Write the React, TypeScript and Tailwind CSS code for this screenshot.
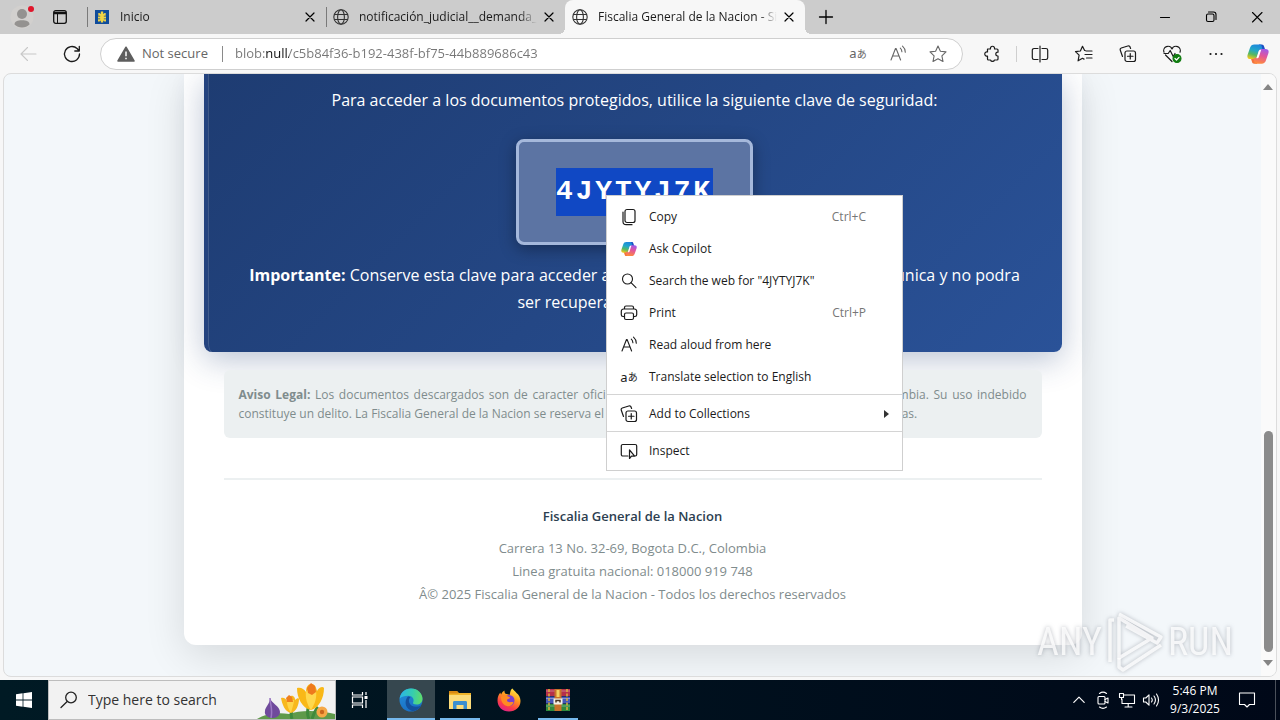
import { useId } from 'react'
import type { ReactNode } from 'react'

// Shared wrapper for the thin line icons, drawn on a 20 unit grid
function LineIcon({ children, className = 'size-5' }: { children: ReactNode; className?: string }) {
  return (
    <svg
      viewBox="0 0 20 20"
      fill="none"
      stroke="currentColor"
      strokeWidth="1.1"
      strokeLinecap="round"
      strokeLinejoin="round"
      className={className}
      aria-hidden="true"
    >
      {children}
    </svg>
  )
}

function CloseIcon() {
  return (
    <LineIcon className="size-4">
      <path d="M5 5l10 10M15 5L5 15" strokeWidth="1.5" />
    </LineIcon>
  )
}

function GlobeIcon() {
  return (
    <svg viewBox="0 0 16 16" fill="none" stroke="#333" strokeWidth="1.1" className="size-4 shrink-0" aria-hidden="true">
      <circle cx="8" cy="8" r="7.2" />
      <ellipse cx="8" cy="8" rx="3.4" ry="7.2" />
      <path d="M1.3 5.5h13.4M1.3 10.5h13.4" />
    </svg>
  )
}

function CrestIcon() {
  return (
    <svg viewBox="0 0 14 14" className="size-3.5 shrink-0" aria-hidden="true">
      <rect width="14" height="14" fill="#0f4c9c" />
      <path
        d="M5.800 1.500h2.400v2.200h1V3h1.500v2.800H8.800v.8h2.200v1.800H8.800v.8h2.200v2.200H9.200v-.7h-1v1.800H5.800v-1.800h-1v.7H3V9.200h2.200v-.8H3V6.600h2.200v-.8H3.300V3h1.500v.7h1z"
        fill="#f2d544"
      />
    </svg>
  )
}

function CopilotIcon({ className }: { className: string }) {
  const id = useId()
  return (
    <svg viewBox="0 0 24 24" className={className} aria-hidden="true">
      <defs>
        <linearGradient id={`${id}a`} x1="0.6" y1="0" x2="0.3" y2="1">
          <stop offset="0" stopColor="#1d86dd" />
          <stop offset="0.4" stopColor="#22a8c8" />
          <stop offset="0.7" stopColor="#58b860" />
          <stop offset="1" stopColor="#f0c81e" />
        </linearGradient>
        <linearGradient id={`${id}b`} x1="0.7" y1="0" x2="0.4" y2="1">
          <stop offset="0" stopColor="#a05be8" />
          <stop offset="0.45" stopColor="#e2559c" />
          <stop offset="1" stopColor="#ff8a3c" />
        </linearGradient>
      </defs>
      <path d="M13 1.500h3.200c1.300 0 2 .8 2.300 1.900L20 8h-6z" fill="#1b4fc4" />
      <path d="M11 22.500H7.800c-1.300 0-2-.8-2.300-1.900L4 16h6z" fill="#f4723c" />
      <path
        d="M8 1.500h6c1.200 0 1.600.7 1.900 1.600L17 7.500h-1.500c-1.500 0-2.200.7-2.700 2.200L11 15.500c-.5 1.500-1.300 2-3 2H3.800c-2.800 0-3.900-1.700-3.200-4.300L3.300 5.200C4 2.700 5.600 1.500 8 1.500z"
        fill={`url(#${id}a)`}
      />
      <path
        d="M16 22.500h-6c-1.200 0-1.600-.7-1.900-1.600L7 16.500h1.500c1.500 0 2.200-.7 2.700-2.200L13 8.500c.5-1.500 1.300-2 3-2h4.200c2.800 0 3.900 1.700 3.200 4.300l-2.700 8c-.7 2.500-2.300 3.700-4.700 3.700z"
        fill={`url(#${id}b)`}
      />
      <path d="M12.800 8.800c.4-1.200 1-1.500 2-1.500h.7l-2.600 7.900c-.4 1.200-1 1.500-2 1.500h-.7z" fill="#fff" />
    </svg>
  )
}

function TranslateIcon() {
  return (
    <span className="flex items-center font-['Noto_Sans','Noto_Sans_CJK_JP',sans-serif] leading-none" aria-hidden="true">
      <span className="text-[13px]">a</span>
      <span className="text-[10px]">あ</span>
    </span>
  )
}

function ReadAloudIcon() {
  return (
    <LineIcon>
      <path d="M3 16L7.500 4.500h.6L12.600 16M4.700 12h6.200" />
      <path d="M12.300 4.200c1 .9 1.500 2 1.600 3.500M14.500 2.200c1.800 1.500 2.700 3.500 2.800 6" />
    </LineIcon>
  )
}

function CollectionsIcon() {
  return (
    <LineIcon>
      <rect x="7" y="7" width="10.500" height="10.500" rx="2" strokeWidth="1.200" />
      <path d="M12.250 9.500v5.500M9.500 12.250h5.500" strokeWidth="1.200" />
      <path d="M4.500 12.500L2.300 6.200c-.4-1 .1-1.900 1-2.200l6.500-2c1-.3 1.900.1 2.200 1.100l.6 1.400" strokeWidth="1.200" />
    </LineIcon>
  )
}

const tabs = [
  { title: 'Inicio', icon: <CrestIcon />, active: false },
  { title: 'notificación_judicial__demanda_penal', icon: <GlobeIcon />, active: false },
  { title: 'Fiscalia General de la Nacion - Sistema', icon: <GlobeIcon />, active: true },
]

function TabStrip() {
  return (
    <header className="flex h-[34px] shrink-0 items-stretch bg-[#cccccc]">
      <button type="button" aria-label="Profile" className="flex w-11 items-center justify-center">
        <svg viewBox="0 0 24 24" className="size-6" aria-hidden="true">
          <circle cx="12" cy="12" r="11.500" fill="#d2d0ce" />
          <circle cx="12" cy="9" r="5" fill="#949290" />
          <path d="M4.500 19.500c0-3 3-4.300 7.500-4.300s7.500 1.300 7.500 4.300c-2 2-4.500 3-7.500 3s-5.500-1-7.500-3z" fill="#949290" />
          <circle cx="21" cy="4" r="3" fill="#e0162b" />
        </svg>
      </button>
      <button type="button" aria-label="Tab actions" className="flex w-8 items-center justify-center">
        <svg viewBox="0 0 14 14" fill="none" stroke="#111" className="size-3.5" aria-hidden="true">
          <rect x="0.700" y="0.700" width="12.600" height="12.600" rx="2" strokeWidth="1.300" />
          <path d="M1 3h12" strokeWidth="2.500" />
          <path d="M4.500 3v10" />
        </svg>
      </button>
      <nav className="ml-[9px] flex min-w-0 items-stretch">
        {tabs.map((tab) => (
          <div
            key={tab.title}
            className={
              tab.active
                ? 'relative ml-0.5 flex w-60 items-center rounded-t-lg bg-[#f7f7f7] pr-2 pl-[5px]'
                : 'relative flex w-[239px] items-center pr-1.5 pl-[7px]'
            }
          >
            {tab.active ? (
              <>
                <span className="absolute bottom-0 -left-1.5 size-1.5 bg-[radial-gradient(circle_at_0_0,#cccccc_6px,#f7f7f7_6px)]" />
                <span className="absolute -right-1.5 bottom-0 size-1.5 bg-[radial-gradient(circle_at_100%_0,#cccccc_6px,#f7f7f7_6px)]" />
              </>
            ) : (
              <span className="absolute left-0.5 h-5 w-px bg-[#7a7a7a]" />
            )}
            <span className="flex w-5 shrink-0 justify-center">{tab.icon}</span>
            <button
              type="button"
              className="ml-2 min-w-0 flex-1 overflow-hidden mask-r-from-90% text-left text-xs whitespace-nowrap text-[#1b1b1b]"
            >
              {tab.title}
            </button>
            <button type="button" aria-label={`Close ${tab.title}`} className="ml-1 shrink-0">
              <CloseIcon />
            </button>
          </div>
        ))}
      </nav>
      <button type="button" aria-label="New tab" className="flex w-[42px] items-center justify-center">
        <LineIcon>
          <path d="M10 3.500v13M3.500 10h13" strokeWidth="1.300" />
        </LineIcon>
      </button>
      <div className="ml-auto flex">
        <button type="button" aria-label="Minimize" className="flex w-[46px] items-center justify-center">
          <LineIcon>
            <path d="M5.500 10.500h9" />
          </LineIcon>
        </button>
        <button type="button" aria-label="Restore" className="flex w-[46px] items-center justify-center">
          <LineIcon>
            <rect x="5.500" y="7" width="7.500" height="7.500" rx="1.500" />
            <path d="M7.500 5h5a2.500 2.500 0 0 1 2.500 2.500v5" />
          </LineIcon>
        </button>
        <button type="button" aria-label="Close window" className="flex w-[46px] items-center justify-center">
          <LineIcon>
            <path d="M5.500 5.500l9.500 9.500M15 5.500L5.500 15" />
          </LineIcon>
        </button>
      </div>
    </header>
  )
}

function ToolButton({ label, children, className = 'w-11' }: { label: string; children: ReactNode; className?: string }) {
  return (
    <button type="button" aria-label={label} className={`flex h-8 shrink-0 items-center justify-center ${className}`}>
      {children}
    </button>
  )
}

function Toolbar() {
  return (
    <div className="flex h-[39px] shrink-0 items-center bg-[#f7f7f7] pr-0.5 text-[#1b1b1b]">
      <button type="button" aria-label="Back" disabled className="ml-1.5 flex h-8 w-11 items-center justify-center text-[#c8c8c8]">
        <LineIcon>
          <path d="M18 10H3M9.500 3.500L3 10l6.500 6.500" />
        </LineIcon>
      </button>
      <ToolButton label="Refresh">
        <LineIcon>
          <path d="M17.500 10a7.500 7.500 0 1 1-2.400-5.500L17.300 7M17.300 2.500V7h-4.500" strokeWidth="1.300" />
        </LineIcon>
      </ToolButton>
      <div className="ml-1.5 flex h-8 min-w-0 flex-1 items-center rounded-full border border-[#cfcfcf] bg-white pr-1 pl-4">
        <button type="button" className="flex shrink-0 items-center gap-[7px] text-[13px] text-[#666]">
          <svg viewBox="0 0 18 16" className="h-4 w-[18px]" aria-hidden="true">
            <path d="M9 1.200L17 15H1z" fill="#5e5e5e" stroke="#5e5e5e" strokeWidth="1.500" strokeLinejoin="round" />
            <path d="M9 5.500v4.700M9 11.800v1.500" stroke="#fff" strokeWidth="1.500" />
          </svg>
          Not secure
        </button>
        <span className="mr-3 ml-3.5 h-4 w-px shrink-0 bg-[#8a8a8a]" />
        <input
          type="text"
          aria-label="Address"
          defaultValue="blob:null/c5b84f36-b192-438f-bf75-44b889686c43"
          className="min-w-0 flex-1 bg-[linear-gradient(90deg,#767676_31px,#111111_31px,#111111_54px,#767676_54px)] bg-clip-text text-[13px] text-transparent outline-none"
        />
        <div className="flex text-[#666]">
          <ToolButton label="Translate" className="w-10">
            <TranslateIcon />
          </ToolButton>
          <ToolButton label="Read aloud" className="w-10">
            <ReadAloudIcon />
          </ToolButton>
          <ToolButton label="Add to favorites" className="w-10">
            <LineIcon>
              <path d="M10 2l2.400 5.200 5.600.7-4.100 3.900 1.100 5.700L10 14.700l-5 2.800 1.100-5.700L2 7.900l5.600-.7z" />
            </LineIcon>
          </ToolButton>
        </div>
      </div>
      <ToolButton label="Extensions" className="ml-2 w-11">
        <LineIcon>
          <path
            d="M4.500 5h3a2.100 2.100 0 1 1 4 0H14c.6 0 1 .4 1 1v2.200h-.3a1.900 1.900 0 0 0 0 3.800h.3v3c0 .6-.4 1-1 1h-2.500a2.100 2.100 0 0 1-4 0h-2c-.6 0-1-.4-1-1V12a2.100 2.100 0 1 1 0-4z"
            strokeWidth="1.200"
          />
        </LineIcon>
      </ToolButton>
      <span className="mx-px h-4 w-px bg-[#cfcfcf]" />
      <ToolButton label="Split screen">
        <LineIcon>
          <path d="M10 2v16M8 4.500H4a1.700 1.700 0 0 0-1.700 1.700v7.600A1.700 1.700 0 0 0 4 15.500h4M12 4.500h4a1.700 1.700 0 0 1 1.700 1.700v7.600a1.700 1.700 0 0 1-1.700 1.700h-4" strokeWidth="1.200" />
        </LineIcon>
      </ToolButton>
      <ToolButton label="Favorites">
        <LineIcon>
          <path d="M11.200 6.500h-.6L8.500 2.300 6.400 7l-4.900.6 3.600 3.600-1 5.600 4.400-2.500 1.500.8M12 7h6M11 10.500h7M12.500 14H18" strokeWidth="1.200" />
        </LineIcon>
      </ToolButton>
      <ToolButton label="Collections">
        <CollectionsIcon />
      </ToolButton>
      <ToolButton label="Browser essentials">
        <LineIcon>
          <path d="M10 17.500L3.500 11M2 8.200a4.200 4.200 0 0 1 8-3.200 4.200 4.200 0 0 1 8 3.200M2 9.500h4.200l2-3 3 6 1.800-3" strokeWidth="1.200" />
          <circle cx="15" cy="14.500" r="4" fill="#107c10" stroke="#107c10" />
          <path d="M13 14.500l1.500 1.500 2.500-2.700" stroke="#fff" strokeWidth="1.200" />
        </LineIcon>
      </ToolButton>
      <ToolButton label="Settings and more">
        <LineIcon>
          <path d="M4.500 10h.01M10 10h.01M15.500 10h.01" strokeWidth="2.200" />
        </LineIcon>
      </ToolButton>
      <ToolButton label="Copilot" className="w-10">
        <CopilotIcon className="size-[22px]" />
      </ToolButton>
    </div>
  )
}

function DocumentPage() {
  return (
    <main className="mx-auto w-[898px] max-w-full rounded-b-xl bg-white px-5 pb-[39px] shadow-[0_10px_40px_rgba(0,0,0,0.12)]">
      <section className="flex flex-col items-center rounded-b-lg border-l-4 border-[#24437f] bg-linear-135 from-[#1e3c72] to-[#2a5298] px-9 pt-3 pb-9 text-center text-base text-white shadow-[0_8px_32px_rgba(30,60,114,0.3),inset_1px_0_rgba(255,255,255,0.15)]">
        <p className="leading-7">Para acceder a los documentos protegidos, utilice la siguiente clave de seguridad:</p>
        <div className="mt-[25px] rounded-lg border-3 border-[#a5b8db] bg-[#5c74a3] px-[37px] py-[26px] shadow-[0_4px_16px_rgba(0,0,0,0.35)]">
          <div className="bg-[#1048c4] font-['Liberation_Mono',monospace] text-[28px] leading-[48px] font-bold tracking-widest">
            4JYTYJ7K
          </div>
        </div>
        <p className="mt-[17px] leading-[27px]">
          <strong>Importante:</strong> Conserve esta clave para acceder a los documentos legales. Esta clave es unica y no
          podra
          <br />
          ser recuperada posteriormente
        </p>
      </section>
      <section className="mx-5 mt-[18px] rounded-md bg-[#ecf0f1] px-[15px] py-[15px] text-justify text-xs leading-[19px] text-[#7f8c8d]">
        <strong>Aviso Legal:</strong> Los documentos descargados son de caracter oficial y confidencial emitidos por la
        Republica de Colombia. Su uso indebido constituye un delito. La Fiscalia General de la Nacion se reserva el
        derecho de emprender las acciones legales respectivas.
      </section>
      <footer className="mx-5 mt-10 border-t-2 border-[#ecf0f1] pt-[25px] text-center text-[13px] leading-[23px] text-[#7f8c8d]">
        <p className="mb-[9px] font-semibold text-[#2c3e50]">Fiscalia General de la Nacion</p>
        <p>Carrera 13 No. 32-69, Bogota D.C., Colombia</p>
        <p>Linea gratuita nacional: 018000 919 748</p>
        <p>Â© 2025 Fiscalia General de la Nacion - Todos los derechos reservados</p>
      </footer>
    </main>
  )
}

function Scrollbar() {
  return (
    <div className="flex w-[15px] shrink-0 flex-col items-center bg-[#fafafa] pt-2.5 pr-px pb-2.5">
      <svg viewBox="0 0 10 6" className="h-1.5 w-2.5" aria-hidden="true">
        <path d="M5 0l5 6H0z" fill="#858585" />
      </svg>
      <div className="flex-[342]" />
      <div className="w-[9px] flex-[221] rounded-full bg-[#8b8b8b]" />
      <div className="h-2" />
      <svg viewBox="0 0 10 6" className="h-1.5 w-2.5" aria-hidden="true">
        <path d="M0 0h10L5 6z" fill="#858585" />
      </svg>
    </div>
  )
}

function Watermark() {
  return (
    <div
      className="absolute right-[43px] bottom-0.5 flex items-center gap-1 font-['Roboto_Condensed','Liberation_Sans_Narrow','Roboto',sans-serif] text-[38px] leading-none text-white/80 drop-shadow-[0_0_2px_rgba(90,95,110,0.5)]"
    >
      <span>ANY</span>
      <svg viewBox="0 0 58 64" fill="none" stroke="currentColor" strokeWidth="3.500" strokeLinejoin="round" className="h-16 w-[58px]" aria-hidden="true">
        <path d="M13 8v40L46 28zM13 4l42 23-4 6L20 16" />
        <path d="M8 10H4v42M13 48v9l4 3 38-25" />
      </svg>
      <span>RUN</span>
    </div>
  )
}

const menuGroups = [
  [
    {
      label: 'Copy',
      shortcut: 'Ctrl+C',
      icon: (
        <LineIcon>
          <rect x="6" y="2.500" width="10" height="13" rx="2" strokeWidth="1.200" />
          <path d="M4 5v9.500A3.200 3.200 0 0 0 7.200 17.700H13" strokeWidth="1.200" />
        </LineIcon>
      ),
    },
    { label: 'Ask Copilot', icon: <CopilotIcon className="size-4" /> },
    {
      label: 'Search the web for "4JYTYJ7K"',
      icon: (
        <LineIcon>
          <circle cx="8.500" cy="8" r="5" />
          <path d="M12 11.700l5 5" />
        </LineIcon>
      ),
    },
    {
      label: 'Print',
      shortcut: 'Ctrl+P',
      icon: (
        <LineIcon>
          <path d="M5.500 13.500H4A1.700 1.700 0 0 1 2.300 11.800V8.200A2.200 2.200 0 0 1 4.500 6h11a2.200 2.200 0 0 1 2.200 2.200v3.600a1.700 1.700 0 0 1-1.700 1.700h-1.500M5.500 6V4.500A1.500 1.500 0 0 1 7 3h6a1.500 1.500 0 0 1 1.500 1.500V6" strokeWidth="1.200" />
          <rect x="5.500" y="10" width="9" height="6.500" rx="1.500" strokeWidth="1.200" />
        </LineIcon>
      ),
    },
    { label: 'Read aloud from here', icon: <ReadAloudIcon /> },
    { label: 'Translate selection to English', icon: <TranslateIcon /> },
  ],
  [{ label: 'Add to Collections', submenu: true, icon: <CollectionsIcon /> }],
  [
    {
      label: 'Inspect',
      icon: (
        <LineIcon>
          <path d="M9 15H3.800a1.500 1.500 0 0 1-1.500-1.500v-8.500a1.500 1.500 0 0 1 1.500-1.500h12.400a1.500 1.500 0 0 1 1.500 1.500v8.500a1.500 1.500 0 0 1-1 1.400" strokeWidth="1.200" />
          <path d="M10.500 9v8.500l2-2.300h3.200z" strokeWidth="1.200" />
        </LineIcon>
      ),
    },
  ],
] as { label: string; shortcut?: string; submenu?: boolean; icon: ReactNode }[][]

function ContextMenu() {
  return (
    <div
      role="menu"
      className="absolute top-[195px] left-[606px] w-[297px] divide-y divide-[#d4d4d4] border border-[#cfcfcf] bg-white pt-[2px] text-xs text-[#1b1b1b]"
    >
      {menuGroups.map((group) => (
        <div key={group[0].label} className="pt-[3px] pb-px last:pb-[3px]">
          {group.map((item) => (
            <button
              key={item.label}
              type="button"
              role="menuitem"
              className="flex h-8 w-full items-center pr-[13px] pl-3 text-left"
            >
              <span className="flex w-5 justify-center">{item.icon}</span>
              <span className="ml-2.5 flex-1">{item.label}</span>
              {item.shortcut && <span className="mr-[23px] text-[#767676]">{item.shortcut}</span>}
              {item.submenu && (
                <svg viewBox="0 0 5 8" className="h-2 w-[5px]" aria-hidden="true">
                  <path d="M0 0l5 4-5 4z" fill="#333" />
                </svg>
              )}
            </button>
          ))}
        </div>
      ))}
    </div>
  )
}

function FlowersArt() {
  return (
    <svg viewBox="0 0 80 38" className="h-[38px] w-20 shrink-0" aria-hidden="true">
      <path d="M2 38c8-5 20-7 32-5 10-4 30-4 46 0v5z" fill="#5f9a4a" />
      <path d="M37 38c-2-5 0-9 0-12M54 38c-3-6-1-11 0-14M57 38c2-6 3-9 6-12" stroke="#3f8a3c" strokeWidth="3" fill="none" />
      <path d="M15 17c1 5 10 8 10 14 0 4-4 6-8 6s-8-3-7-7c0-4 5-7 5-13z" fill="#6f4a9c" />
      <path d="M15 17c0 6 3 11 1 20" stroke="#9b78c4" strokeWidth="1.500" fill="none" />
      <path d="M26 17c3-1 5 1 6 3 1-4 4-6 6-5 2 1 2 3 2 4 2-2 4-2 4-1 0 6-3 13-8 14-6-1-9-9-10-15z" fill="#f8b81c" />
      <path d="M32 20c0 4 1 8 4 12 1-5 3-9 3-13-2 0-5 0-7 1z" fill="#ffd548" />
      <path d="M31 17l3-3 3 2 1 5h-6z" fill="#ee7f1d" />
      <path d="M42 7c4-1 7 1 9 4 0-5 2-8 5-8 4 0 5 3 6 7 2-4 6-5 7-3 0 10-5 20-13 22-9-2-14-12-14-22z" fill="#f9b817" />
      <path d="M51 10c-1 6 1 14 5 19 4-6 6-13 5-19-3-2-7-2-10 0z" fill="#ffd84d" />
      <path d="M52 7l4-5 4 3 1 6-4 3-4-2z" fill="#ee7a1c" />
      <circle cx="67" cy="31" r="5.500" fill="#f5a846" />
      <circle cx="67" cy="31" r="2.200" fill="#c9671d" />
    </svg>
  )
}

function TaskbarApp({ label, state, children }: { label: string; state: 'active' | 'open' | 'idle'; children: ReactNode }) {
  return (
    <button
      type="button"
      aria-label={label}
      className={`relative flex w-12 items-center justify-center ${state === 'active' ? 'bg-[#36474f]' : ''}`}
    >
      {children}
      {state === 'active' && <span className="absolute inset-x-0 bottom-0 h-0.5 bg-[#76b9ed]" />}
      {state === 'open' && <span className="absolute inset-x-1 bottom-0 h-0.5 bg-[#76b9ed]" />}
    </button>
  )
}

function EdgeIcon() {
  const id = useId()
  return (
    <svg viewBox="0 0 24 24" className="size-6" aria-hidden="true">
      <defs>
        <linearGradient id={`${id}a`} x1="0" y1="0.300" x2="1" y2="0.400">
          <stop offset="0" stopColor="#2bb5e8" />
          <stop offset="0.550" stopColor="#35cdb0" />
          <stop offset="1" stopColor="#5fdc6a" />
        </linearGradient>
        <linearGradient id={`${id}b`} x1="0" y1="0" x2="0.400" y2="1">
          <stop offset="0" stopColor="#2491dc" />
          <stop offset="1" stopColor="#1a6fc4" />
        </linearGradient>
      </defs>
      <circle cx="12" cy="12" r="11.500" fill={`url(#${id}b)`} />
      <path d="M.7 10.500C1.500 4.600 6.200.5 12 .5c6.800 0 11.500 5 11.500 10.200 0 3.600-2.700 5.800-5.900 5.800-2.800 0-4-1-3.500-2 1.100-1.800.7-6.700-5-6.700-3.500 0-6.700.8-8.400 2.700z" fill={`url(#${id}a)`} />
      <path d="M9 8.500c-3 3-3.500 9 .5 12.500 1.500 1.300 3.300 2 5.500 2.100 3-.8 5.700-2.800 7.200-5.600-4.700 2.300-10.700 1.300-12-3-.7-2.300.1-4.300 1.500-5.500-.8-.4-1.700-.6-2.700-.5z" fill="#14509c" />
    </svg>
  )
}

function FirefoxIcon() {
  const id = useId()
  return (
    <svg viewBox="0 0 24 24" className="size-6" aria-hidden="true">
      <defs>
        <linearGradient id={id} x1="0.800" y1="0" x2="0.300" y2="1">
          <stop offset="0" stopColor="#fff04a" />
          <stop offset="0.400" stopColor="#ff9a1f" />
          <stop offset="0.750" stopColor="#fb3c48" />
          <stop offset="1" stopColor="#e0218a" />
        </linearGradient>
      </defs>
      <path d="M15.500.5c1 2 2.700 2.800 4 4.500 2.500 1.800 4 5 4 8C23.500 19 18.500 23.500 12 23.500S.5 19 .5 12.500c0-3.500 1-6 3-8 0 1 .3 1.500.6 2 .7-2 2-3.300 3.400-4-.2 1.500.2 2.500 1 3.300 1.500.2 3 .7 4 1.200 1-2.500.5-5 3-6.500z" fill={`url(#${id})`} />
      <circle cx="12" cy="12.500" r="5.500" fill="#7a3fd0" />
      <path d="M4 9c2-2.500 5.500-2 7-.5 1 .1 2 .5 2 1.300 0 .7-1.500 1-2.500 1.500-1 .6-.5 2 .5 2.500 2 1 4-.5 5.500.500-1 3-3.500 4.200-6 3.900C6.500 17.500 3.800 13.500 4 9z" fill="#ff8b22" />
    </svg>
  )
}

function Taskbar() {
  return (
    <footer className="flex h-10 shrink-0 items-stretch bg-linear-to-r from-[#001a24] to-[#000818] text-white">
      <button type="button" aria-label="Start" className="flex w-12 items-center justify-center">
        <svg viewBox="0 0 16 16" className="size-4" fill="#fff" aria-hidden="true">
          <path d="M0 2.200L6.600 1.300v6.300H0zM7.400 1.200L16 0v7.600H7.400zM0 8.400h6.600v6.300L0 13.800zM7.400 8.400H16V16l-8.600-1.200z" />
        </svg>
      </button>
      <label className="flex w-72 items-center border border-[#bdbdbd] bg-[#f2f2f2] pl-2.5 text-[#222]">
        <LineIcon>
          <circle cx="12" cy="7.500" r="5.300" strokeWidth="1.300" />
          <path d="M8.200 11.500L2 17.500" strokeWidth="1.300" />
        </LineIcon>
        <input
          type="text"
          aria-label="Search"
          placeholder="Type here to search"
          className="ml-[9px] min-w-0 flex-1 bg-transparent text-sm outline-none placeholder:text-[#333]"
        />
        <FlowersArt />
      </label>
      <button type="button" aria-label="Task view" className="flex w-12 items-center justify-center">
        <svg viewBox="0 0 18 16" fill="none" stroke="#fff" strokeWidth="1.200" className="h-4 w-[18px]" aria-hidden="true">
          <path d="M1.500 0v3h10V0M1.500 16v-3h10v3M1.500 5h10v6h-10zM15 0v3M15 8v8" />
          <path d="M15 4v3" strokeWidth="3" />
        </svg>
      </button>
      <div className="ml-[3px] flex gap-px">
        <TaskbarApp label="Microsoft Edge" state="active">
          <EdgeIcon />
        </TaskbarApp>
        <TaskbarApp label="File Explorer" state="open">
          <svg viewBox="0 0 22 20" className="h-5 w-[22px]" aria-hidden="true">
            <path d="M0 1h8l2 2h12v16H0z" fill="#f0b429" />
            <path d="M0 5h22v14H0z" fill="#fcdc7a" />
            <path d="M0 1h8l1.500 2.500H0z" fill="#d98a12" />
            <path d="M4 12.500c0-1 .6-1.500 1.500-1.500h11c1 0 1.500.5 1.500 1.500V19h-3.500v-4h-7v4H4z" fill="#3b8fd0" />
          </svg>
        </TaskbarApp>
        <TaskbarApp label="Firefox" state="idle">
          <FirefoxIcon />
        </TaskbarApp>
        <TaskbarApp label="WinRAR" state="open">
          <svg viewBox="0 0 24 24" className="size-6" aria-hidden="true">
            <rect y="1" width="24" height="7" fill="#b5304a" />
            <rect y="8.500" width="24" height="7" fill="#4658b8" />
            <rect y="16" width="24" height="7" fill="#2f8a3e" />
            <path d="M0 3h24M0 10.500h24M0 18h24" stroke="#fff" strokeOpacity="0.350" />
            <path d="M3 1v22M21 1v22" stroke="#dfb33c" strokeWidth="1.500" strokeDasharray="3 1.500" />
            <rect x="8.500" y="1" width="7" height="22" fill="#c9722a" />
            <path d="M12 2v7" stroke="#f4d060" strokeWidth="3" />
            <rect x="7.500" y="10.500" width="9" height="6" fill="#f4f0e4" />
            <path d="M10 14.500v-2h4v2" stroke="#4a3420" strokeWidth="1.500" fill="none" />
          </svg>
        </TaskbarApp>
      </div>
      <div className="ml-auto flex items-center">
        <button type="button" aria-label="Show hidden icons" className="flex w-6 justify-center">
          <LineIcon className="size-4">
            <path d="M3.500 13L10 6.500l6.500 6.500" strokeWidth="1.500" />
          </LineIcon>
        </button>
        <button type="button" aria-label="Meet now" className="flex w-6 justify-center">
          <LineIcon>
            <rect x="5" y="6.500" width="7" height="7.500" rx="1" />
            <path d="M12 9.500l3-1.500v5l-3-1.500M6.500 3.500c2-1.500 5-1.500 7 0M6.500 17c2 1.500 5 1.500 7 0" />
          </LineIcon>
        </button>
        <button type="button" aria-label="Network" className="flex w-6 justify-center">
          <LineIcon>
            <path d="M7 5h10.500v8.500H5V9M11.200 13.500V17M8 17h7M2.500 3.500h4v4h-4zM4.500 7.500v2" />
          </LineIcon>
        </button>
        <button type="button" aria-label="Volume" className="flex w-6 justify-center">
          <LineIcon>
            <path d="M2.500 8h2.300L8 4.800v10.400L4.800 12H2.500zM10.500 8c.9 1.200.9 2.800 0 4M13 6c1.800 2.500 1.800 5.500 0 8M15.500 4c2.700 4 2.700 8 0 12" />
          </LineIcon>
        </button>
        <button type="button" className="w-16 text-center text-xs leading-[18px]">
          5:46 PM
          <br />
          9/3/2025
        </button>
        <button type="button" aria-label="Notifications" className="flex w-10 justify-center">
          <LineIcon>
            <path d="M2.500 3h15v11.500h-5L10 17l-2.500-2.500h-5z" />
          </LineIcon>
        </button>
        <span className="mr-1 ml-2 h-10 w-px bg-[#4a505a]" />
      </div>
    </footer>
  )
}

export default function App() {
  return (
    <div className="relative flex h-screen flex-col overflow-hidden bg-[#f7f7f7] font-['Open_Sans','Noto_Sans',sans-serif]">
      <TabStrip />
      <Toolbar />
      <div className="flex min-h-0 flex-1 px-[3px] pb-[3px]">
        <div className="relative flex flex-1 overflow-hidden rounded-lg border border-[#dcdcdc] bg-[#f3f7fa]">
          <div className="min-w-0 flex-1 overflow-hidden">
            <DocumentPage />
          </div>
          <Scrollbar />
          <Watermark />
        </div>
      </div>
      <Taskbar />
      <ContextMenu />
    </div>
  )
}
